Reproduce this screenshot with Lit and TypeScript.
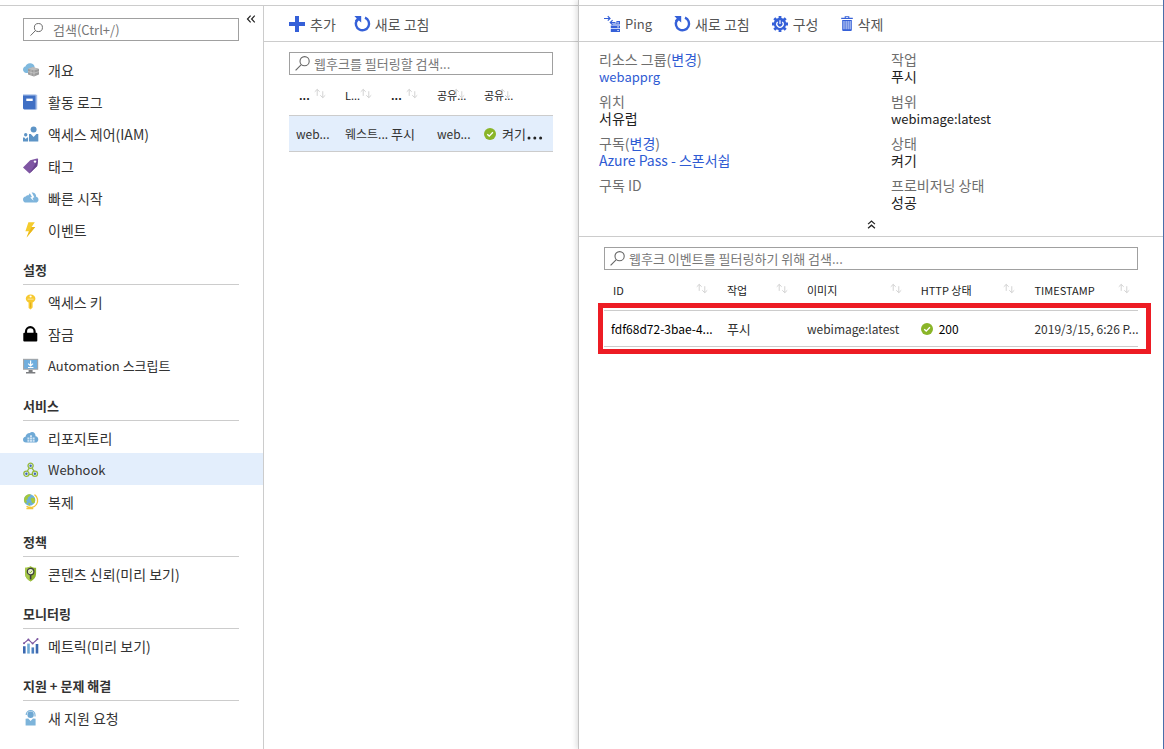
import { LitElement, html, css, svg, nothing } from "lit";
import type { TemplateResult } from "lit";
import { customElement, property } from "lit/decorators.js";
import { classMap } from "lit/directives/class-map.js";

const shapes: Record<string, TemplateResult> = {
  registry: svg`
    <path fill="#7fb9de" d="M3.600 11A3.300 3.300 0 0 1 0 7.600C0 6 1 4.800 2.400 4.600 3 2.400 5 1 7.300 1.200c2 0 3.300 1 4 2.600l.4 1.600-5.700 1-1.200 4.600z"/>
    <path fill="#9b9b9b" d="m5 7 4.600-1.900L16 7v5.600l-5 1.900L5 12.600z"/>
    <path fill="#bdbdbd" d="m5 7 4.600-1.900L16 7l-5 1.600z"/>
    <path stroke="#d5d5d5" stroke-width=".6" fill="none" d="m5 9.600 6 1.600 5-1.600M11 8.600v5.600M8 8v5.200"/>`,
  log: svg`
    <path fill="#3f6fc4" d="M0 .800h12.800V15.400H1.300A1.300 1.300 0 0 1 0 14.100z"/>
    <path fill="#a9c1ea" d="M12.800.800H14.200V15.400h-1.400zM0 .800h14.200v.8H0z"/>
    <path fill="#fff" d="M3.300 4.600h6.400v2.400H3.300z"/>`,
  people: svg`
    <circle cx="10.600" cy="3.600" r="3" fill="#5d94c6"/>
    <path fill="#5d94c6" d="M6 15.400V8h1.800l2.800 3L13.400 8H15.300v7.400z"/>
    <circle cx="2.700" cy="8.800" r="1.700" fill="#5d94c6"/>
    <path fill="#5d94c6" d="M0 15.400v-3.800h1.300l1.400 1.500 1.500-1.500h.9v3.800z"/>`,
  tag: svg`
    <path fill="#7f56a3" d="m0 9.400 7.200-7.200L14 .500c.8-.1 1.200.4 1.100 1.100L14.200 8 6.500 15.400z"/>
    <path fill="#69438d" d="m6.500 15.400 7.700-7.400.9-6.400z"/>
    <circle cx="12" cy="3.600" r="1.200" fill="#fff"/>`,
  quick: svg`
    <path fill="#7fb5dc" d="M3.200 12.600A3.200 3.200 0 0 1 0 9.500c0-1.600 1.100-2.900 2.700-3 .6-.9 1.700-1.400 2.900-1.300C6.300 3.200 8.100 2.200 9.800 2.600c2.300.4 3.400 2.200 3.400 4.200 1.600.3 2.300 1.500 2.300 2.900 0 1.700-1.200 2.900-2.900 2.900z"/>
    <path fill="#fff" d="m6.400 2.600 2.600 4.400-1.800.4 3.400 3.400-1-2.900 1.700-.6L8.200 1.600z"/>`,
  bolt: svg`<path fill="#f5cc2d" d="M5.400.2h6.400L8.600 5h3.600L3.600 15.500l2.200-6.300H2.400z"/>
    <path fill="#e9b71c" d="M8.600 5h3.600L3.600 15.500z"/>`,
  key: svg`
    <path fill="#f7c92f" d="M7.600.4c2.800 0 4.800 1.700 4.800 4.200 0 1.700-1 3-2.800 3.900v5l-2 2.100-2-1.600V8.500C3.800 7.600 2.800 6.300 2.800 4.600 2.800 2.100 4.800.4 7.600.4z"/>
    <circle cx="7.600" cy="2.500" r="1.100" fill="#fff"/>
    <path fill="#fbe08a" d="M4.600 4.600h6v1.200h-6z"/>
    <path fill="#d9a91a" d="M7.200 8.500h.8v5h-.8z"/>`,
  lock: svg`
    <rect x="0.300" y="6.800" width="14" height="8.700" rx="1"/>
    <path fill="none" stroke="#000" stroke-width="2.200" d="M3 8V5.400a4.300 4.200 0 0 1 8.600 0V8"/>`,
  monitor: svg`
    <path fill="#a5a7a9" d="M0 .800h15.200v11H0z"/>
    <path fill="#70aede" d="M1.100 1.900h13v8.800h-13z"/>
    <path fill="#7b7d80" d="M5.600 12h4v2h2.700v1.400H3V14h2.600z"/>
    <path fill="none" stroke="#fff" stroke-width="1.200" d="M7.600 2.500v5.500M5.200 5.600 7.600 8 10 5.600M5 9.500h5.400"/>`,
  repo: svg`
    <path fill="#70aad6" d="M3 12.600a3 3 0 0 1-3-3c0-1.500 1-2.700 2.500-2.900C2.800 4.500 4.600 2.900 6.900 2.900c.6-.6 1.500-.9 2.300-.8 2 .1 3.400 1.500 3.400 4.200 1.600.1 2.700 1.400 2.700 3.100 0 1.800-1.300 3.200-3.100 3.200z"/>
    <path fill="#cfe3f3" d="M4.400 7.600h2v1.800h-2zM7 7.600h2v1.800H7zM9.600 7.600h2v1.800h-2zM7 5.200h2V7H7zM4.400 10h2v1.800h-2zM7 10h2v1.800H7zM9.600 10h2v1.800h-2z"/>`,
  webhook: svg`
    <g fill="none" stroke="#94b93c" stroke-width="1.300">
      <circle cx="7.600" cy="3.700" r="2.600"/><circle cx="3.400" cy="11.800" r="2.600"/><circle cx="11.900" cy="11.800" r="2.600"/>
      <path d="M6.200 6.100 4.400 9M9 6.100l2.100 3M6 12.400h3.300"/>
    </g>
    <g fill="#3f66b5"><circle cx="7.600" cy="3.700" r="1.200"/><circle cx="3.400" cy="11.800" r="1.200"/><circle cx="11.900" cy="11.800" r="1.200"/></g>`,
  globe: svg`
    <path fill="none" stroke="#f3c63a" stroke-width="1.300" d="M11.500.6a7 7 0 0 1-8 11.800"/>
    <path fill="#f3c63a" d="M6.400 12.600h1.400v1.300h2.500v1.300H3.400v-1.300h3z"/>
    <circle cx="6.600" cy="6" r="5.700" fill="#6cb0dc"/>
    <path fill="#a5c83b" d="M2.800 1.800c2-1.500 4-1.600 5-1.300L6.400 2.400l-1.300.8-.6 2.200L3 6l.9 1.400-.6 2L1.400 8.200C.6 5.800 1.200 3.400 2.800 1.800zM8.600 3.600l3 .3c.8 1.800.7 3.900-.3 5.400l-2.500-.5-.4-2-1-1.500zM5.600 8.500l1.700.9-.4 2.100-1.500-.3z"/>`,
  shield: svg`
    <path fill="#8fb42c" d="M7.600.2c1.800 1 3.400 1.500 5.500 1.600v5.800c0 3.800-2.200 6.400-5.500 8-3.300-1.600-5.500-4.200-5.500-8V1.800C4.200 1.700 5.800 1.200 7.600.2z"/>
    <path fill="#a7c94a" d="M7.600.2v15.400c-3.300-1.600-5.500-4.200-5.500-8V1.800C4.200 1.700 5.800 1.200 7.600.2z"/>
    <circle cx="7.600" cy="5.600" r="3.300" fill="#e8f1cf" stroke="#3d3d3d" stroke-width="1.200"/>
    <path fill="none" stroke="#8fb42c" stroke-width="1" d="m6.100 5.600 1.200 1.200 2-2.200"/>
    <path fill="#3d3d3d" d="M6.800 9h1.600v4.400H6.800z"/>`,
  metrics: svg`
    <path fill="#3b68b0" d="M0 8.200h2.600v7.400H0zM12.700 6h2.600v9.600h-2.600z"/>
    <path fill="#70aad6" d="M4.200 5.600h2.600v10H4.200z"/><path fill="#4a7fc0" d="M8.500 9.400h2.600v6.200H8.500z"/>
    <path fill="none" stroke="#7c56a0" stroke-width="1.100" d="M.8 5.400 5.400 1.600l4.200 4L14.600 1"/>
    <g fill="#7c56a0"><circle cx="1" cy="5.200" r="1"/><circle cx="5.400" cy="1.600" r="1"/><circle cx="9.600" cy="5.600" r="1"/><circle cx="14.500" cy="1.100" r="1"/></g>`,
  support: svg`
    <path fill="none" stroke="#7db4da" stroke-width="1.200" d="M3.200 5a4.400 4.300 0 0 1 8.800 0v1.600"/>
    <circle cx="7.600" cy="4.800" r="3.200" fill="#6fa8d3"/>
    <path fill="#7db4da" d="M2.600 15.400V8.800l2.600-.4L7.600 11 10 8.400l2.600.4v6.600z"/>`,
  plus: svg`<path fill="#3560d8" d="M6 0h4v6h6v4h-6v6H6v-6H0V6h6z"/>`,
  refresh: svg`
    <path fill="none" stroke="#3560d8" stroke-width="2.400" d="M11 1.600A6.600 6.600 0 1 1 2.800 4.300"/>
    <path fill="#3560d8" d="M.4 0h6.800v6.600L4.900 4.500 2.600 6.300 1 4.500 2.700 2.400z"/>`,
  ping: svg`
    <g fill="none" stroke="#3560d8" stroke-width="1.200"><path d="M0 2.500h5.800M3.800.2l2.200 2.300-2.200 2.100M11.500 6.500H6.400M8.600 4.200 6.300 6.500l2.300 2.200"/></g>
    <path fill="#3560d8" d="M6.800 9.400H16v2.900H6.800zM6.800 13.100H16V16H6.800zM12.400 5H16v3.600H8.400v-1h4z"/>
    <path fill="#fff" d="M13.400 10.300h1.300v1.200h-1.300zM13.400 13.900h1.300v1.200h-1.300zM13.400 6.200h1.300v1.200h-1.300z"/>`,
  gear: svg`
    <g stroke="#3560d8" stroke-width="2.800"><path d="M8 0v16M0 8h16M2.300 2.300l11.400 11.400M13.700 2.300 2.300 13.700"/></g>
    <circle cx="8" cy="8" r="6.200" fill="#3560d8"/>
    <path fill="none" stroke="#fff" stroke-width="1.200" d="M10.300 5.800a3.200 3.200 0 1 1-4.600 0M8 4.200v3.800"/>`,
  trash: svg`
    <path fill="#3560d8" d="M3.700.2h4.600v1.500h3.500v1.400H.2V1.700h3.500zM1.200 3.900h9.600v10a1 1 0 0 1-1 1H2.200a1 1 0 0 1-1-1z"/>
    <path fill="#fff" d="M4.800.9h2.400v.8H4.800zM2.600 5h.8v8.200h-.8zM4.700 5h.8v8.200h-.8zM6.700 5h.8v8.200h-.8zM8.700 5h.8v8.200h-.8z"/>`,
  search: svg`<g fill="none" stroke="#666" stroke-width="1.100"><circle cx="9.600" cy="5.200" r="4.600"/><path d="M6.300 8.600.6 14.400"/></g>`,
  sort: svg`<path fill="none" stroke="#cfcfcf" d="M3.500 8.500v-7M.8 4.100 3.500 1.500l2.700 2.600M9.500 3.500v7M6.800 7.900l2.700 2.600 2.700-2.600"/>`,
  check: svg`<circle cx="8" cy="8" r="8" fill="#8ab528"/><path fill="none" stroke="#fff" stroke-width="1.800" d="m4.300 8.200 2.700 2.600 4.900-5.200"/>`,
  left: svg`<path fill="none" stroke="#222" stroke-width="1.600" d="M7.500 3.500 3.300 8l4.200 4.500M13 3.500 8.800 8l4.200 4.500"/>`,
  up: svg`<path fill="none" stroke="#222" stroke-width="1.800" d="M3 7.500 8 3l5 4.500M3 13.500 8 9l5 4.500"/>`,
  more: svg`<g fill="#222"><circle cx="2" cy="8" r="1.500"/><circle cx="7.800" cy="8" r="1.500"/><circle cx="13.600" cy="8" r="1.500"/></g>`,
};

const base = css`
  * { box-sizing: border-box; }
  button { font: inherit; color: inherit; background: none; border: 0; margin: 0; padding: 0; cursor: pointer; }
  a { color: inherit; text-decoration: none; }
  .latin { font-size: 13px; }
`;

@customElement("ui-icon")
class UiIcon extends LitElement {
  static styles = css`
    :host { display: inline-block; flex: none; width: 16px; height: 16px; }
    :host([size="small"]) { width: 12px; height: 12px; }
    :host([name="trash"]) { width: 12px; }
    svg { display: block; width: 100%; height: 100%; overflow: visible; }
  `;
  @property() name = "";
  render() {
    const box = this.name === "sort" ? "0 0 13 13" : this.name === "trash" ? "0 0 12 16" : "0 0 16 16";
    return html`<svg viewBox=${box} aria-hidden="true">${shapes[this.name] ?? nothing}</svg>`;
  }
}

@customElement("search-box")
class SearchBox extends LitElement {
  static styles = [base, css`
    :host { display: block; }
    label { display: flex; align-items: center; gap: 3px; height: 23px; padding: 0 5px; border: 1px solid #a0a0a0; background: #fff; }
    :host([roomy]) label { gap: 9px; padding-left: 6px; }
    :host([roomy]) ui-icon { width: 14px; height: 14px; }
    input { flex: 1; min-width: 0; height: 20px; border: 0; padding: 0; outline: 0; background: none; font: inherit; font-size: 13px; color: #333; }
    input::placeholder { color: #777; opacity: 1; }
  `];
  @property() hint = "";
  render() {
    return html`<label><ui-icon name="search"></ui-icon><input type="text" placeholder=${this.hint} aria-label=${this.hint} /></label>`;
  }
}

interface NavItem { icon: string; text: string; latin?: boolean; current?: boolean; }
interface NavGroup { title?: string; items: NavItem[]; }

const groups: NavGroup[] = [
  { items: [
    { icon: "registry", text: "개요" },
    { icon: "log", text: "활동 로그" },
    { icon: "people", text: "액세스 제어(IAM)" },
    { icon: "tag", text: "태그" },
    { icon: "quick", text: "빠른 시작" },
    { icon: "bolt", text: "이벤트" },
  ] },
  { title: "설정", items: [
    { icon: "key", text: "액세스 키" },
    { icon: "lock", text: "잠금" },
    { icon: "monitor", text: "Automation 스크립트", latin: true },
  ] },
  { title: "서비스", items: [
    { icon: "repo", text: "리포지토리" },
    { icon: "webhook", text: "Webhook", latin: true, current: true },
    { icon: "globe", text: "복제" },
  ] },
  { title: "정책", items: [{ icon: "shield", text: "콘텐츠 신뢰(미리 보기)" }] },
  { title: "모니터링", items: [{ icon: "metrics", text: "메트릭(미리 보기)" }] },
  { title: "지원 + 문제 해결", items: [{ icon: "support", text: "새 지원 요청" }] },
];

@customElement("side-menu")
class SideMenu extends LitElement {
  static styles = [base, css`
    :host { display: block; border-right: 1px solid #ccc; }
    .top { display: flex; align-items: flex-start; }
    search-box { flex: 1; margin: 12px 0 12px 23px; }
    .collapse { width: 24px; height: 26px; display: grid; place-items: center; }
    h2 { display: flex; align-items: flex-end; height: 40px; margin: 0 24px 0 23px; padding-bottom: 4px; border-bottom: 1px solid #ccc; font-size: 13px; line-height: 20px; font-weight: 700; color: #333; }
    ul { list-style: none; margin: 0; padding: 0; }
    .item { display: flex; align-items: center; gap: 9px; height: 32px; padding: 2px 0 0 23px; color: #333; line-height: 20px; white-space: nowrap; }
    .current { background: #e3eefc; }
  `];
  render() {
    return html`
      <div class="top">
        <search-box roomy hint="검색(Ctrl+/)"></search-box>
        <button class="collapse" aria-label="메뉴 접기"><ui-icon size="small" name="left"></ui-icon></button>
      </div>
      <nav>${groups.map((g) => html`
        ${g.title ? html`<h2>${g.title}</h2>` : nothing}
        <ul>${g.items.map((i) => html`
          <li><a href="#" class=${classMap({ item: true, current: !!i.current })}>
            <ui-icon name=${i.icon}></ui-icon><span class=${classMap({ latin: !!i.latin })}>${i.text}</span>
          </a></li>`)}</ul>`)}
      </nav>`;
  }
}

@customElement("command-bar")
class CommandBar extends LitElement {
  static styles = [base, css`
    :host { display: flex; gap: 18px; height: 36px; padding-left: 25px; border-bottom: 1px solid #ccc; }
    :host([roomy]) { gap: 22px; }
    button { display: flex; align-items: center; gap: 5px; color: #555; line-height: 20px; white-space: nowrap; }
  `];
  @property({ attribute: false }) commands: [string, string][] = [];
  render() {
    return this.commands.map(([icon, text]) => html`
      <button><ui-icon name=${icon}></ui-icon><span class=${classMap({ latin: icon === "ping" })}>${text}</span></button>`);
  }
}

const grid = css`
  table { width: 100%; table-layout: fixed; border-collapse: separate; border-spacing: 0; text-align: left; color: #333; }
  th, td { padding: 0 0 0 7px; white-space: nowrap; }
  th { position: relative; height: 40px; font-size: 11px; font-weight: 400; line-height: 16px; color: #222; }
  .sort { position: absolute; right: 12px; top: 13px; }
  td { height: 37px; font-size: 13px; line-height: 20px; border-top: 1px solid #ccc; border-bottom: 1px solid #ccc; }
  .narrow { font-size: 12px; }
  .status { display: flex; align-items: center; gap: 6px; }
`;
const sort = html`<ui-icon class="sort" size="small" name="sort"></ui-icon>`;

@customElement("webhook-list")
class WebhookList extends LitElement {
  static styles = [base, grid, css`
    :host { display: block; }
    .body { padding: 10px 25px 0; }
    td { background: #e3eefc; }
    .c1 { width: 49px; } .c2, .c3 { width: 46px; } .c4 { width: 47px; } .c6 { width: 30px; }
    th:first-child { padding-left: 10px; }
    th.bold { font-weight: 700; }
    td:last-child { padding: 0 0 3px 4px; vertical-align: bottom; }
    .more { display: grid; place-items: center; width: 16px; height: 20px; }
  `];
  render() {
    return html`
      <command-bar .commands=${[["plus", "추가"], ["refresh", "새로 고침"]]}></command-bar>
      <div class="body">
        <search-box hint="웹후크를 필터링할 검색..."></search-box>
        <table>
          <colgroup><col class="c1" /><col class="c2" /><col class="c3" /><col class="c4" /><col /><col class="c6" /></colgroup>
          <thead><tr>
            <th class="bold">...${sort}</th><th>L...${sort}</th><th class="bold">...${sort}</th><th>공유...${sort}</th><th>공유...${sort}</th><th></th>
          </tr></thead>
          <tbody><tr>
            <td class="narrow">web...</td><td class="narrow">웨스트...</td><td>푸시</td><td class="narrow">web...</td>
            <td><span class="status"><ui-icon size="small" name="check"></ui-icon>켜기</span></td>
            <td><button class="more" aria-label="추가 옵션"><ui-icon name="more"></ui-icon></button></td>
          </tr></tbody>
        </table>
      </div>`;
  }
}

@customElement("webhook-detail")
class WebhookDetail extends LitElement {
  static styles = [base, grid, css`
    :host { display: block; }
    .facts { display: grid; grid-template-columns: 1fr 1fr; row-gap: 8px; margin: 0; padding: 9px 0 1px; line-height: 17px; }
    .fact { padding-left: 20px; min-height: 34px; }
    dt { color: #6e6e6e; }
    dd { margin: 0; color: #222; }
    dt, dd { height: 17px; white-space: nowrap; }
    .facts a { color: #2f5bd3; }
    .fold { display: grid; place-items: center; width: 100%; height: 25px; border-bottom: 1px solid #ccc; }
    .fold ui-icon { width: 11px; height: 11px; }
    .events { padding: 10px 25px 0; }
    .list { position: relative; }
    .c1 { width: 21.7%; } .c2 { width: 15%; } .c3, .c4 { width: 21.3%; }
    th:first-child { padding-left: 9px; }
    th:last-child .sort { right: 8px; }
    .strong { color: #000; }
    .mark { position: absolute; inset: 33px -13px -7px -6px; border: 5px solid #ed1c24; pointer-events: none; }
  `];
  render() {
    const change = html`(<a href="#">변경</a>)`;
    return html`
      <command-bar roomy .commands=${[["ping", "Ping"], ["refresh", "새로 고침"], ["gear", "구성"], ["trash", "삭제"]]}></command-bar>
      <dl class="facts">
        <div class="fact"><dt>리소스 그룹${change}</dt><dd class="latin"><a href="#">webapprg</a></dd></div>
        <div class="fact"><dt>작업</dt><dd>푸시</dd></div>
        <div class="fact"><dt>위치</dt><dd>서유럽</dd></div>
        <div class="fact"><dt>범위</dt><dd class="latin">webimage:latest</dd></div>
        <div class="fact"><dt>구독${change}</dt><dd><a href="#">Azure Pass - 스폰서쉽</a></dd></div>
        <div class="fact"><dt>상태</dt><dd>켜기</dd></div>
        <div class="fact"><dt>구독 ID</dt><dd></dd></div>
        <div class="fact"><dt>프로비저닝 상태</dt><dd>성공</dd></div>
      </dl>
      <button class="fold" aria-label="접기"><ui-icon name="up"></ui-icon></button>
      <div class="events">
        <search-box hint="웹후크 이벤트를 필터링하기 위해 검색..."></search-box>
        <div class="list">
          <table>
            <colgroup><col class="c1" /><col class="c2" /><col class="c3" /><col class="c4" /><col /></colgroup>
            <thead><tr><th>ID${sort}</th><th>작업${sort}</th><th>이미지${sort}</th><th>HTTP 상태${sort}</th><th>TIMESTAMP${sort}</th></tr></thead>
            <tbody><tr>
              <td class="narrow strong">fdf68d72-3bae-4...</td><td>푸시</td><td class="narrow">webimage:latest</td>
              <td class="narrow"><span class="status strong"><ui-icon size="small" name="check"></ui-icon>200</span></td>
              <td class="narrow">2019/3/15, 6:26 P...</td>
            </tr></tbody>
          </table>
          <div class="mark"></div>
        </div>
      </div>`;
  }
}

@customElement("app-root")
class AppRoot extends LitElement {
  static styles = [base, css`
    :host { display: grid; grid-template-columns: 264px 314px minmax(0, 1fr); min-height: 100vh; background: #fff; border-right: 1px solid #4a6ea9; box-sizing: border-box; font-family: "Noto Sans CJK KR", "Noto Sans", sans-serif; font-size: 14px; line-height: 20px; color: #333; }
    .pane { display: flex; flex-direction: column; min-width: 0; }
    .pane::before { content: ""; height: 6px; border-bottom: 1px solid #ccc; box-sizing: border-box; flex: none; }
    .pane > * { flex: 1; }
    .front { border-left: 1px solid #c4c4c4; box-shadow: -2px 0 5px rgba(0, 0, 0, 0.12); background: #fff; clip-path: inset(0 0 0 -8px); }
  `];
  render() {
    return html`
      <div class="pane"><side-menu></side-menu></div>
      <div class="pane"><webhook-list></webhook-list></div>
      <div class="pane front"><webhook-detail></webhook-detail></div>`;
  }
}
